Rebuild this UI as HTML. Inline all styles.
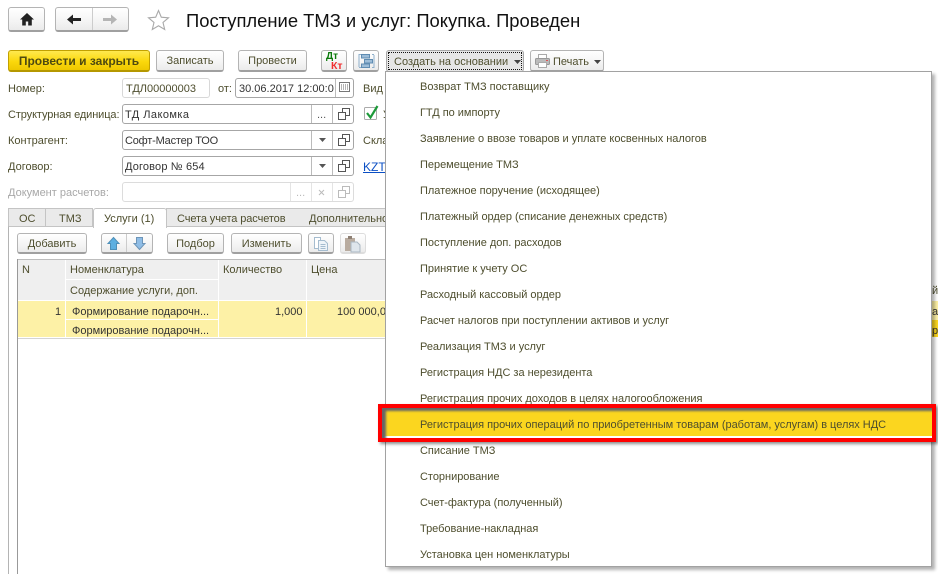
<!DOCTYPE html>
<html><head><meta charset="utf-8"><style>
html,body{margin:0;padding:0;background:#fff}
#p{position:relative;width:938px;height:574px;overflow:hidden;background:#fff;font:11px "Liberation Sans",sans-serif;color:#4e4e2e}
#p div,#p span.a,#p svg{position:absolute;box-sizing:border-box}
.t{white-space:nowrap;line-height:14px;height:14px;margin-top:1px}
.b{background:linear-gradient(#fff,#f4f4f4 60%,#ebebeb);border:1px solid #b4b4b4;border-bottom:2px solid #a0a0a0;border-radius:3px;text-align:center;white-space:nowrap}
.f{border:1px solid #a6a6a6;border-radius:3px;background:#fff;height:20px}
.m{left:420px;white-space:nowrap;line-height:14px;height:14px;font-size:11px;letter-spacing:-.02px;margin-top:1px}
.h{background:#efefef}
</style></head><body><div id="p">

<div class="b" style="left:8px;top:7px;width:37px;height:25px"></div>
<svg style="left:19px;top:13px" width="16" height="13" viewBox="0 0 16 13"><path d="M8 0L1 6.500h2.200V12.500h3.600V8.500h2.400v4h3.600V6.500H15z" fill="#222"/></svg>
<div class="b" style="left:55px;top:7px;width:74px;height:25px"></div>
<div style="left:92px;top:8px;width:1px;height:22px;background:#ccc"></div>
<svg style="left:66px;top:13px" width="16" height="13" viewBox="0 0 16 13"><path d="M1 6.500L7 1.500V5h8v3H7v3.500z" fill="#222"/></svg>
<svg style="left:102px;top:13px" width="16" height="13" viewBox="0 0 16 13"><path d="M15 6.500L9 1.500V5H1v3h8v3.500z" fill="#b5b5b5"/></svg>
<svg style="left:147px;top:9px" width="23" height="22" viewBox="0 0 23 22"><path d="M11.500 1.500l2.800 6.700 7.200.6-5.500 4.700 1.700 7-6.200-3.700-6.200 3.700 1.700-7L1.500 8.800l7.200-.6z" fill="#fff" stroke="#a9a9a9" stroke-width="1.100"/></svg>
<div class="t" style="left:186px;top:10px;height:20px;line-height:20px;font-size:18.400px;color:#111">Поступление ТМЗ и услуг: Покупка. Проведен</div>

<div class="b" style="left:8px;top:50px;width:142px;height:22px;background:linear-gradient(#ffe94f,#fbd80c 55%,#eec800);border:1px solid #c2a100;border-bottom:2px solid #b59800;font-weight:bold;color:#4e4a10;line-height:21px;font-size:12px">Провести и закрыть</div>
<div class="b" style="left:156px;top:50px;width:68px;height:22px;line-height:21px">Записать</div>
<div class="b" style="left:238px;top:50px;width:69px;height:22px;line-height:21px">Провести</div>
<div class="b" style="left:321px;top:50px;width:26px;height:22px"></div>
<div class="t" style="left:326px;top:51px;font:bold 10px/10px 'Liberation Sans',sans-serif;color:#0a7a0a;height:10px">Дт</div>
<div class="t" style="left:331px;top:60px;font:bold 10.500px/10px 'Liberation Sans',sans-serif;color:#f03030;height:10px">Кт</div>
<div class="b" style="left:353px;top:50px;width:26px;height:22px"></div>
<svg style="left:358px;top:53px" width="17" height="16" viewBox="0 0 17 16"><path d="M1 14V1.500h2M1 14.500h2M16 2v12.500h-2M16 1.500h-2" fill="none" stroke="#8fb0cc"/><rect x="3.500" y="1.500" width="8" height="3.500" fill="#9dbdd8" stroke="#5f8cb2"/><rect x="6.500" y="6.500" width="8" height="3.500" fill="#9dbdd8" stroke="#5f8cb2"/><rect x="3.500" y="11" width="8" height="3.500" fill="#9dbdd8" stroke="#5f8cb2"/></svg>
<div style="left:386px;top:50px;width:138px;height:22px;background:#e6e6e6;border:1px solid #a8a8a8;border-radius:3px"></div>
<div style="left:388px;top:52px;width:134px;height:18px;border:1px dotted #111"></div>
<div class="t" style="left:394px;top:54px">Создать на основании</div>
<svg style="left:514px;top:60px" width="7" height="4"><path d="M0 0h7L3.500 4z" fill="#444"/></svg>
<div class="b" style="left:530px;top:50px;width:74px;height:22px"></div>
<svg style="left:535px;top:54px" width="15" height="14" viewBox="0 0 15 14"><rect x="3.500" y=".5" width="8" height="4" fill="#fff" stroke="#aaa"/><rect x=".5" y="4.500" width="14" height="6" rx="1" fill="#bbb" stroke="#999"/><rect x="3.500" y="8.500" width="8" height="5" fill="#fff" stroke="#aaa"/><rect x="11" y="6" width="2" height="1" fill="#d55"/></svg>
<div class="t" style="left:553px;top:54px">Печать</div>
<svg style="left:594px;top:60px" width="7" height="4"><path d="M0 0h7L3.500 4z" fill="#444"/></svg>

<div class="t" style="left:8px;top:81px">Номер:</div>
<div class="f" style="left:122px;top:78px;width:88px;border-color:#d8d8d8"></div>
<div class="t" style="left:126px;top:81px">ТДЛ00000003</div>
<div class="t" style="left:218px;top:81px">от:</div>
<div class="f" style="left:235px;top:78px;width:119px"></div>
<div class="t" style="left:239px;top:81px;width:95px;overflow:hidden;color:#333">30.06.2017 12:00:0</div>
<div style="left:335px;top:79px;width:1px;height:18px;background:#bbb"></div>
<svg style="left:339px;top:82px" width="12" height="12"><rect x=".5" y=".5" width="10" height="9" fill="#fff" stroke="#777"/><path d="M2 3h7M2 5h7M2 7h7" stroke="#666" stroke-dasharray="1 1"/></svg>
<div class="t" style="left:363px;top:81px">Вид</div>

<div class="t" style="left:8px;top:107px;letter-spacing:-.1px">Структурная единица:</div>
<div class="f" style="left:122px;top:104px;width:232px"></div>
<div class="t" style="left:125px;top:107px;color:#333;letter-spacing:.45px">ТД Лакомка</div>
<div class="t" style="left:8px;top:133px">Контрагент:</div>
<div class="f" style="left:122px;top:130px;width:232px"></div>
<div class="t" style="left:125px;top:133px;color:#333;letter-spacing:-.2px">Софт-Мастер ТОО</div>
<div class="t" style="left:8px;top:159px">Договор:</div>
<div class="f" style="left:122px;top:156px;width:232px"></div>
<div class="t" style="left:125px;top:159px;color:#333;letter-spacing:.15px">Договор № 654</div>
<div class="t" style="left:8px;top:185px;color:#a8a8a8">Документ расчетов:</div>
<div class="f" style="left:122px;top:182px;width:232px;border-color:#dcdcdc"></div>

<div style="left:311px;top:105px;width:1px;height:18px;background:#bbb"></div>
<div style="left:332px;top:105px;width:1px;height:18px;background:#bbb"></div>
<div style="left:311px;top:131px;width:1px;height:18px;background:#bbb"></div>
<div style="left:332px;top:131px;width:1px;height:18px;background:#bbb"></div>
<div style="left:311px;top:157px;width:1px;height:18px;background:#bbb"></div>
<div style="left:332px;top:157px;width:1px;height:18px;background:#bbb"></div>
<div style="left:290px;top:183px;width:1px;height:18px;background:#e4e4e4"></div>
<div style="left:311px;top:183px;width:1px;height:18px;background:#e4e4e4"></div>
<div style="left:332px;top:183px;width:1px;height:18px;background:#e4e4e4"></div>
<div class="t" style="left:317px;top:107px;color:#555">...</div>
<div class="t" style="left:296px;top:185px;color:#bbb">...</div>
<svg style="left:319px;top:138px" width="7" height="4"><path d="M0 0h7L3.500 4z" fill="#555"/></svg>
<svg style="left:319px;top:164px" width="7" height="4"><path d="M0 0h7L3.500 4z" fill="#555"/></svg>
<svg style="left:318px;top:189px" width="7" height="7"><path d="M1 1l5 5M6 1L1 6" stroke="#bbb"/></svg>
<svg style="left:338px;top:108px" width="12" height="12"><path d="M4.500.5h7v7h-7z" fill="#fff" stroke="#555"/><path d="M.5 4.500h7v7h-7z" fill="#fff" stroke="#555"/></svg>
<svg style="left:338px;top:134px" width="12" height="12"><path d="M4.500.5h7v7h-7z" fill="#fff" stroke="#555"/><path d="M.5 4.500h7v7h-7z" fill="#fff" stroke="#555"/></svg>
<svg style="left:338px;top:160px" width="12" height="12"><path d="M4.500.5h7v7h-7z" fill="#fff" stroke="#555"/><path d="M.5 4.500h7v7h-7z" fill="#fff" stroke="#555"/></svg>
<svg style="left:338px;top:186px" width="12" height="12"><path d="M4.500.5h7v7h-7z" fill="#fff" stroke="#bbb"/><path d="M.5 4.500h7v7h-7z" fill="#fff" stroke="#bbb"/></svg>

<svg style="left:363px;top:104px" width="18" height="17" viewBox="0 0 18 17"><rect x="1.500" y="3.500" width="12" height="12" rx="1" fill="#fff" stroke="#aaa"/><path d="M4 9l3.500 4.500L14.500 2" fill="none" stroke="#1d9a3a" stroke-width="2.200"/></svg>
<div class="t" style="left:383px;top:107px;width:3px;overflow:hidden">У</div>
<div class="t" style="left:363px;top:133px">Скла</div>
<div class="t" style="left:363px;top:159px;color:#0b4fc4;text-decoration:underline;font-size:12px">KZT</div>

<div style="left:8px;top:208px;width:38px;height:19px;background:#eaeaea;border:1px solid #c4c4c4;border-bottom:0"></div>
<div class="t" style="left:19px;top:211px">ОС</div>
<div style="left:46px;top:208px;width:47px;height:19px;background:#eaeaea;border:1px solid #c4c4c4;border-left:0;border-bottom:0"></div>
<div class="t" style="left:59px;top:211px">ТМЗ</div>
<div style="left:166px;top:208px;width:132px;height:19px;background:#eaeaea;border:1px solid #c4c4c4;border-bottom:0"></div>
<div class="t" style="left:177px;top:211px;letter-spacing:-.1px">Счета учета расчетов</div>
<div style="left:297px;top:208px;width:89px;height:19px;background:#eaeaea;border-top:1px solid #c4c4c4"></div>
<div class="t" style="left:309px;top:211px;width:77px;overflow:hidden">Дополнительно</div>
<div style="left:8px;top:226px;width:378px;height:348px;border-left:1px solid #b4b4b4;border-top:1px solid #c4c4c4"></div>
<div style="left:93px;top:208px;width:74px;height:20px;background:#fff;border:1px solid #c4c4c4;border-bottom:0;border-radius:3px 3px 0 0"></div>
<div class="t" style="left:104px;top:211px">Услуги (1)</div>

<div class="b" style="left:17px;top:233px;width:70px;height:21px;line-height:20px">Добавить</div>
<div class="b" style="left:101px;top:233px;width:52px;height:21px"></div>
<div style="left:126px;top:234px;width:1px;height:18px;background:#ccc"></div>
<svg style="left:106px;top:236px" width="15" height="15" viewBox="0 0 15 15"><path d="M7.500 1.500L13 7.500h-2.500v6h-6v-6H2z" fill="#5dafe0" stroke="#4d8fb8"/></svg>
<svg style="left:132px;top:236px" width="15" height="15" viewBox="0 0 15 15"><path d="M7.500 13.500L13 7.500h-2.500v-6h-6v6H2z" fill="#8fbde6" stroke="#6d95b8"/></svg>
<div class="b" style="left:167px;top:233px;width:57px;height:21px;line-height:20px">Подбор</div>
<div class="b" style="left:231px;top:233px;width:71px;height:21px;line-height:20px">Изменить</div>
<div class="b" style="left:308px;top:233px;width:26px;height:21px"></div>
<svg style="left:313px;top:236px" width="16" height="16" viewBox="0 0 16 16"><path d="M1.500 1.500h6v11h-6z" fill="#fff" stroke="#a5bccf"/><path d="M5.500 4.500h6l3 3v7h-9z" fill="#eef4f9" stroke="#a5bccf"/><path d="M7.500 8.500h5M7.500 10.500h5M7.500 12.500h5" stroke="#a5bccf"/></svg>
<div class="b" style="left:340px;top:233px;width:26px;height:21px;border-color:#ddd"></div>
<svg style="left:344px;top:235px" width="18" height="18" viewBox="0 0 18 18"><path d="M1 3h10v13H1z" fill="#b9aca0"/><path d="M4 1h4v3H4z" fill="#8e8074"/><path d="M7 7h6l3 3v7H7z" fill="#dfe6ec" stroke="#aab7c2"/></svg>

<div style="left:17px;top:259px;width:369px;height:315px;border-left:1px solid #999"></div>
<div style="left:18px;top:259px;width:368px;height:1px;background:#bdbdbd"></div>
<div class="h" style="left:18px;top:260px;width:47px;height:40px"></div>
<div class="h" style="left:66px;top:260px;width:152px;height:19px"></div>
<div class="h" style="left:66px;top:280px;width:152px;height:20px"></div>
<div class="h" style="left:219px;top:260px;width:87px;height:40px"></div>
<div class="h" style="left:307px;top:260px;width:79px;height:40px"></div>
<div class="t" style="left:22px;top:262px">N</div>
<div class="t" style="left:70px;top:262px">Номенклатура</div>
<div class="t" style="left:70px;top:283px">Содержание услуги, доп.</div>
<div class="t" style="left:223px;top:262px">Количество</div>
<div class="t" style="left:311px;top:262px">Цена</div>
<div style="left:18px;top:301px;width:368px;height:36px;background:#fdf1a6"></div>
<div style="left:65px;top:301px;width:1px;height:36px;background:#fff"></div>
<div style="left:218px;top:301px;width:1px;height:36px;background:#fff"></div>
<div style="left:306px;top:301px;width:1px;height:36px;background:#fff"></div>
<div style="left:66px;top:319px;width:152px;height:1px;background:#fff"></div>
<div style="left:18px;top:338px;width:368px;height:1px;background:#d4d4d4"></div>
<div class="t" style="left:55px;top:304px;color:#333">1</div>
<div class="t" style="left:72px;top:304px;color:#333">Формирование подарочн...</div>
<div class="t" style="left:72px;top:323px;color:#333">Формирование подарочн...</div>
<div class="t" style="left:275px;top:304px;color:#333">1,000</div>
<div class="t" style="left:337px;top:304px;width:49px;overflow:hidden;color:#333">100 000,00</div>

<div style="left:932px;top:301px;width:6px;height:19px;background:#fdf1a6"></div>
<div style="left:932px;top:320px;width:6px;height:17px;background:#fbd61f"></div>
<div class="t" style="left:932px;top:283px;width:6px;overflow:hidden">йк</div>
<div class="t" style="left:932px;top:304px;width:6px;overflow:hidden;color:#333">ат</div>
<div class="t" style="left:932px;top:323px;width:6px;overflow:hidden;color:#333">р</div>

<div style="left:385px;top:71px;width:547px;height:496px;background:#fff;border:1px solid #a2a2a2;box-shadow:3px 3px 3px rgba(0,0,0,.3)"></div>
<div class="m" style="top:79px">Возврат ТМЗ поставщику</div>
<div class="m" style="top:105px">ГТД по импорту</div>
<div class="m" style="top:131px">Заявление о ввозе товаров и уплате косвенных налогов</div>
<div class="m" style="top:157px">Перемещение ТМЗ</div>
<div class="m" style="top:183px">Платежное поручение (исходящее)</div>
<div class="m" style="top:209px">Платежный ордер (списание денежных средств)</div>
<div class="m" style="top:235px">Поступление доп. расходов</div>
<div class="m" style="top:261px">Принятие к учету ОС</div>
<div class="m" style="top:287px">Расходный кассовый ордер</div>
<div class="m" style="top:313px">Расчет налогов при поступлении активов и услуг</div>
<div class="m" style="top:339px">Реализация ТМЗ и услуг</div>
<div class="m" style="top:365px">Регистрация НДС за нерезидента</div>
<div class="m" style="top:391px">Регистрация прочих доходов в целях налогообложения</div>
<div style="left:378px;top:404px;width:558px;height:38px;background:#fbd61f;border:4px solid #f00;box-shadow:inset 4px 3px 2px #666, inset 0 -2px 0 #fff,2px 2px 3px rgba(0,0,0,.45)"></div>
<div class="m" style="top:417px">Регистрация прочих операций по приобретенным товарам (работам, услугам) в целях НДС</div>
<div class="m" style="top:443px">Списание ТМЗ</div>
<div class="m" style="top:469px">Сторнирование</div>
<div class="m" style="top:495px">Счет-фактура (полученный)</div>
<div class="m" style="top:521px">Требование-накладная</div>
<div class="m" style="top:547px">Установка цен номенклатуры</div>
</div></body></html>
